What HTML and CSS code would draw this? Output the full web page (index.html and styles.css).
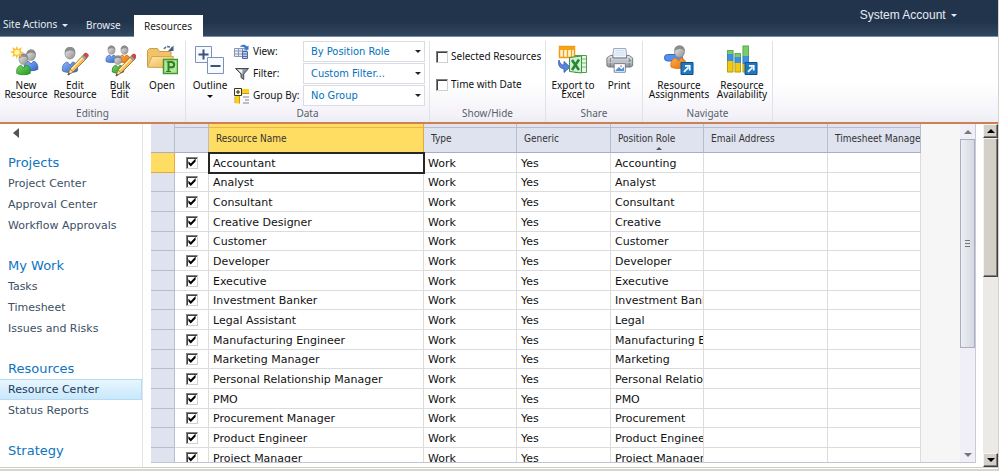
FILE: index.html
```html
<!DOCTYPE html>
<html lang="en">
<head>
<meta charset="utf-8">
<title>Resource Center</title>
<link rel="stylesheet" href="styles.css">
</head>
<body>
<div class="page">
  <header class="topbar">
    <nav class="tabs">
      <button class="site-actions" type="button">Site Actions <span class="caret"></span></button>
      <button class="tab" type="button">Browse</button>
      <button class="tab tab-active" type="button">Resources</button>
    </nav>
    <button class="account" type="button">System Account <span class="caret"></span></button>
  </header>

  <svg class="defs" width="0" height="0" aria-hidden="true">
    <defs>
      <linearGradient id="gGray" x1="0" y1="0" x2="1" y2="1"><stop offset="0" stop-color="#f0f0f0"/><stop offset="1" stop-color="#8c8c8c"/></linearGradient>
      <linearGradient id="gBlue" x1="0" y1="0" x2="1" y2="1"><stop offset="0" stop-color="#8db8f5"/><stop offset="1" stop-color="#2f62c4"/></linearGradient>
      <linearGradient id="gGreen" x1="0" y1="0" x2="1" y2="1"><stop offset="0" stop-color="#7ad662"/><stop offset="1" stop-color="#1f9a22"/></linearGradient>
      <linearGradient id="gOrange" x1="0" y1="0" x2="1" y2="1"><stop offset="0" stop-color="#ffb04a"/><stop offset="1" stop-color="#ea6a00"/></linearGradient>
      <linearGradient id="gFolder" x1="0" y1="0" x2="1" y2="1"><stop offset="0" stop-color="#ffe9a6"/><stop offset="1" stop-color="#eeb04a"/></linearGradient>
      <linearGradient id="gPrinter" x1="0" y1="0" x2="0" y2="1"><stop offset="0" stop-color="#e8eaee"/><stop offset="1" stop-color="#8f939c"/></linearGradient>
      <g id="head"><path d="M0-5.500C3.500-5.500 5-3 5 0S3 6 0 6-5 3.500-5 0-3.500-5.500 0-5.500z" fill="url(#gGray)" stroke="#808080" stroke-width=".7"/><path d="M-4.800-.5C-5.500-5-1.500-6.500 1-6 4-5.700 5.500-3 4.900 0 3.800-2.600 0-3.800-4.800-.5z" fill="#8c8c8c"/></g>
      <path id="torso" d="M-7.500 7C-8.500 1-5-2-2.500-2L0 1 2.500-2C5-2 8.500 1 7.500 7 4 9-4 9-7.500 7z"/>
      <g id="pencil"><path d="M0 0l2-6L15-19.500l3.500 3L5-3z" fill="#f7bd58" stroke="#9c6a2a" stroke-width=".9"/><path d="M3.500-6L15.800-18.500" stroke="#fff0b8" stroke-width="1.200"/><path d="M0 0l2-6L5-3z" fill="#efd8ae" stroke="#8a6a40" stroke-width=".6"/><path d="M0 0l.8-2.300L2.200-1z" fill="#333"/><path d="M14-18.500l1.600-1.800 3.400 3L17.300-15.500z" fill="#8ea7a8" stroke="#666" stroke-width=".5"/><path d="M15.600-20.300l1.300-1.500c1.800-.6 3.800 1.200 3.400 2.900L19-17.300z" fill="#dc4a46" stroke="#9b2c2c" stroke-width=".6"/></g>
      <g id="jump"><path d="M.5.500h12v12H.5z" fill="#1e78c2" stroke="#0f4f8c"/><path d="M3.500 9.800l4.500-4.500M4.500 3.800h4.700v4.700" fill="none" stroke="#fff" stroke-width="1.700"/></g>
    </defs>
  </svg>

  <section class="ribbon" aria-label="Resources ribbon">
    <div class="group group-editing">
      <div class="tools">
        <button class="tool tool-new" type="button">
          <svg class="icon" viewBox="0 0 32 32"><g transform="translate(21 10) scale(.9)"><use href="#head"/><use href="#torso" y="9" fill="url(#gBlue)" stroke="#23479a" stroke-width=".7"/></g><g transform="translate(13.500 14) scale(.9)"><use href="#head"/><use href="#torso" y="9" fill="url(#gGreen)" stroke="#1a7a1d" stroke-width=".7"/></g><path d="M7 1l1.300 3.300L12 2l-1.500 4L14 7.500l-3.500 1L12 12.500 8.200 10.500 6.500 14 5.500 10.500 2 12l1.500-3.500L0 7l3.500-1.300L2 2l3.500 2z" fill="#ffc02e"/><circle cx="7" cy="7.300" r="2.600" fill="#fff6b0"/></svg>
          <span class="label">New<br>Resource</span>
        </button>
        <button class="tool tool-edit" type="button">
          <svg class="icon" viewBox="0 0 32 32"><g transform="translate(11 8)"><use href="#torso" y="11" fill="url(#gBlue)" stroke="#3763b4" stroke-width=".7"/><use href="#head"/></g><use href="#pencil" x="9" y="30"/></svg>
          <span class="label">Edit<br>Resource</span>
        </button>
        <button class="tool tool-bulk" type="button">
          <svg class="icon" viewBox="0 0 32 32"><g transform="translate(7.500 5) scale(.72)"><use href="#torso" y="9" fill="url(#gBlue)" stroke="#3763b4"/><use href="#head"/></g><g transform="translate(20.500 5) scale(.72)"><use href="#torso" y="9" fill="url(#gOrange)" stroke="#c45a00"/><use href="#head"/></g><g transform="translate(14 15) scale(.75)"><use href="#torso" y="9" fill="url(#gGreen)" stroke="#1a7a1d"/><use href="#head"/></g><use href="#pencil" x="12" y="31"/></svg>
          <span class="label">Bulk<br>Edit</span>
        </button>
        <button class="tool tool-open" type="button">
          <svg class="icon" viewBox="0 0 32 32"><path d="M1.500 22V5.500l2-2h8l2 3H25v6L22 22z" fill="#f2c268" stroke="#c99c50"/><path d="M1.500 22L6 11.500h21.500L24 23z" fill="url(#gFolder)" stroke="#d3a75a"/><path d="M18 4c1.500-3 5-3 7.500-1" fill="none" stroke="#5a7294" stroke-width="1.600" stroke-dasharray="3 1"/><path d="M27.500.5V6H22z" fill="#3f5f92"/><path d="M17.500 14.500h14v14h-14z" fill="#b6e59e" stroke="#3f9b2f" stroke-width="1.500"/><path d="M22.500 26.500v-9.500h2.700c4 0 4 5.300 0 5.300h-2.500" fill="none" stroke="#2c8120" stroke-width="2"/><path d="M20 26.500h5M20.500 17h2" stroke="#2c8120"/></svg>
          <span class="label">Open</span>
        </button>
      </div>
      <h2 class="group-title">Editing</h2>
    </div>

    <div class="group group-data">
      <div class="tools">
        <button class="tool tool-outline" type="button">
          <svg class="icon" viewBox="0 0 32 32"><path d="M1.500 1.500h16v16h-16z" fill="#f7faff" stroke="#7d92b8"/><path d="M4.500 9.500h10M9.500 4.500v10" stroke="#3c5278" stroke-width="2"/><path d="M13.500 12.500h16v16h-16z" fill="#f7faff" stroke="#7d92b8"/><path d="M16.500 21h10" stroke="#3c5278" stroke-width="2"/></svg>
          <span class="label">Outline</span><span class="caret caret-dark"></span>
        </button>
        <div class="fields">
          <div class="field">
            <svg class="mini" viewBox="0 0 16 16"><path d="M.5 4.500h12v8H.5zM.5 7h12M.5 10h12M4.500 4.500v8M8.500 4.500v8" fill="#e7eefb" stroke="#8797b6"/><path d="M6 3c1-3 5-3 7-.5l1.500-1v4.300H10l1.500-1.300C10 2.500 8 2.500 6 3z" fill="#3976d0"/><path d="M8.500 7.500h5v7h-5z" fill="#b7cdf1" stroke="#526c9e"/><path d="M8.500 10h5M8.500 12.500h5" stroke="#526c9e"/></svg>
            <label for="view">View:</label>
            <span class="pick"><select id="view"><option>By Position Role</option></select></span>
          </div>
          <div class="field">
            <svg class="mini" viewBox="0 0 16 16"><path d="M1.500 2.500h13L9.700 8v5.500L7 11.500V8z" fill="#8d949c" stroke="#444b53"/><path d="M3.500 3.500h5L8.300 8z" fill="#f2f4f6"/></svg>
            <label for="filter">Filter:</label>
            <span class="pick"><select id="filter"><option>Custom Filter...</option></select></span>
          </div>
          <div class="field">
            <svg class="mini" viewBox="0 0 16 16"><path d="M8 1h7v5H8zM1.500 8H6v7.500H1.500z" fill="#f8d21c"/><path d="M1 8.500V15M5.500 8v7.500M8 5.500h7" stroke="#c99b10"/><path d="M9 9h6M11 12h4M9 15h6" stroke="#7c8794"/><path d="M.5.500h7v7h-7z" fill="#fffbd6" stroke="#333"/><path d="M2 4h4M4 2v4" stroke="#222"/></svg>
            <label for="groupby">Group By:</label>
            <span class="pick"><select id="groupby"><option>No Group</option></select></span>
          </div>
        </div>
      </div>
      <h2 class="group-title">Data</h2>
    </div>

    <div class="group group-show">
      <div class="tools checks">
        <label class="check"><input class="box" type="checkbox">Selected Resources</label>
        <label class="check"><input class="box" type="checkbox">Time with Date</label>
      </div>
      <h2 class="group-title">Show/Hide</h2>
    </div>

    <div class="group group-share">
      <div class="tools">
        <button class="tool tool-excel" type="button">
          <svg class="icon" viewBox="0 0 32 32"><path d="M2.500 1.500h15v11h-15z" fill="#fff4cf" stroke="#f09a12" stroke-width="1.500"/><path d="M2 3.500h16" stroke="#f6a31a" stroke-width="3"/><path d="M6.500 2v11M10.500 2v11M14.500 2v11" stroke="#f2a11c" stroke-width="1.300"/><path d="M2 15c1 4 3 5 5 5v-3.500l6 5.500-6 5.500v-4C3 24 .5 20 2 15z" fill="#5b86df" stroke="#2d55ab" stroke-width=".8"/><path d="M18 10.500h11.500v17H18z" fill="#e8f6e4" stroke="#49a050"/><path d="M24 14h5M24 18h5M24 22h5" stroke="#6fbd6b"/><path d="M12.500 12.500l12-1.500v17l-12-1.500z" fill="#d5efce" stroke="#3a9445"/><path d="M15 15l7 10M22 14.500L15 25" stroke="#24873a" stroke-width="2.600"/></svg>
          <span class="label">Export to<br>Excel</span>
        </button>
        <button class="tool tool-print" type="button">
          <svg class="icon" viewBox="0 0 32 32"><g transform="translate(3 1) scale(.86)"><path d="M9 3h14l1.500 11h-17z" fill="#f4f9ff" stroke="#8596ab"/><path d="M10.500 5.500h11M10 8h12M9.500 10.500h13" stroke="#bcd4ef"/><path d="M5 11h3v3h16v-3h3l4 3v9l-2.500 1.500h-25L1 23v-9z" fill="url(#gPrinter)" stroke="#686d77"/><path d="M5 14v10M27 14v10" stroke="#70757e"/><path d="M2 19h28" stroke="#c8ccd3"/><circle cx="28.500" cy="17" r=".9" fill="#3cb54a"/><path d="M9.500 20.500h13v10h-13z" fill="#fff" stroke="#667180"/><path d="M11 28.500l4-4 3 2.500 3-3v5H11z" fill="#4b93e2"/><circle cx="17.500" cy="23.500" r="1.200" fill="#f28b7b"/></g></svg>
          <span class="label">Print</span>
        </button>
      </div>
      <h2 class="group-title">Share</h2>
    </div>

    <div class="group group-nav">
      <div class="tools">
        <button class="tool tool-assign" type="button">
          <svg class="icon" viewBox="0 0 32 32"><rect x="1.500" y="9.500" width="18" height="6.500" rx="3" fill="#5590ec" stroke="#3467c0"/><use href="#torso" x="15.500" y="15" fill="url(#gOrange)" stroke="#cf6a10" stroke-width=".7"/><use href="#head" x="16.500" y="6.500"/><use href="#jump" x="17.500" y="17"/></svg>
          <span class="label">Resource<br>Assignments</span>
        </button>
        <button class="tool tool-avail" type="button">
          <svg class="icon" viewBox="0 0 32 32"><path d="M1 5h6.500v4H1zM8.500 8H15v4H8.500zM16.500.5H23V11h-6.500z" fill="#78cd68"/><path d="M1 9h6.500v7H1zM8.500 12H15v6H8.500zM16.500 11H23v8h-6.500z" fill="#3d8fe8"/><path d="M1 16h6.500v11.500H1zM8.500 18H15v9.500H8.500zM16.500 19H23v8.500h-6.500z" fill="#f7c70c"/><path d="M1.500 5.500H7V27H1.500zM9 8.500h5.500V27H9zM17 1h5.500v26H17z" fill="none" stroke="#44733f" stroke-opacity=".4"/><use href="#jump" x="18.500" y="17"/></svg>
          <span class="label">Resource<br>Availability</span>
        </button>
      </div>
      <h2 class="group-title">Navigate</h2>
    </div>
  </section>

  <div class="content">
    <nav class="sidebar" aria-label="Quick launch">
      <button class="collapse" type="button" aria-label="Collapse"></button>
      <section class="nav-group">
        <h3><a href="#">Projects</a></h3>
        <a href="#">Project Center</a>
        <a href="#">Approval Center</a>
        <a href="#">Workflow Approvals</a>
      </section>
      <section class="nav-group">
        <h3><a href="#">My Work</a></h3>
        <a href="#">Tasks</a>
        <a href="#">Timesheet</a>
        <a href="#">Issues and Risks</a>
      </section>
      <section class="nav-group">
        <h3><a href="#">Resources</a></h3>
        <a class="current" href="#">Resource Center</a>
        <a href="#">Status Reports</a>
      </section>
      <section class="nav-group">
        <h3><a href="#">Strategy</a></h3>
      </section>
    </nav>

    <main class="grid-frame">
      <div class="grid-view">
        <table class="grid">
          <colgroup><col class="c-row"><col class="c-check"><col class="c-name"><col class="c-type"><col class="c-generic"><col class="c-role"><col class="c-email"><col class="c-time"></colgroup>
          <thead><tr><th class="corner"></th><th></th><th class="sorted">Resource Name</th><th>Type</th><th>Generic</th><th class="role">Position Role</th><th>Email Address</th><th>Timesheet Manager</th></tr></thead>
          <tbody>
            <tr class="active"><td></td><td><input class="box" type="checkbox" aria-label="Accountant" checked></td><td>Accountant</td><td>Work</td><td>Yes</td><td>Accounting</td><td></td><td></td></tr>
            <tr><td></td><td><input class="box" type="checkbox" aria-label="Analyst" checked></td><td>Analyst</td><td>Work</td><td>Yes</td><td>Analyst</td><td></td><td></td></tr>
            <tr><td></td><td><input class="box" type="checkbox" aria-label="Consultant" checked></td><td>Consultant</td><td>Work</td><td>Yes</td><td>Consultant</td><td></td><td></td></tr>
            <tr><td></td><td><input class="box" type="checkbox" aria-label="Creative Designer" checked></td><td>Creative Designer</td><td>Work</td><td>Yes</td><td>Creative</td><td></td><td></td></tr>
            <tr><td></td><td><input class="box" type="checkbox" aria-label="Customer" checked></td><td>Customer</td><td>Work</td><td>Yes</td><td>Customer</td><td></td><td></td></tr>
            <tr><td></td><td><input class="box" type="checkbox" aria-label="Developer" checked></td><td>Developer</td><td>Work</td><td>Yes</td><td>Developer</td><td></td><td></td></tr>
            <tr><td></td><td><input class="box" type="checkbox" aria-label="Executive" checked></td><td>Executive</td><td>Work</td><td>Yes</td><td>Executive</td><td></td><td></td></tr>
            <tr><td></td><td><input class="box" type="checkbox" aria-label="Investment Banker" checked></td><td>Investment Banker</td><td>Work</td><td>Yes</td><td>Investment Banker</td><td></td><td></td></tr>
            <tr><td></td><td><input class="box" type="checkbox" aria-label="Legal Assistant" checked></td><td>Legal Assistant</td><td>Work</td><td>Yes</td><td>Legal</td><td></td><td></td></tr>
            <tr><td></td><td><input class="box" type="checkbox" aria-label="Manufacturing Engineer" checked></td><td>Manufacturing Engineer</td><td>Work</td><td>Yes</td><td>Manufacturing Engineer</td><td></td><td></td></tr>
            <tr><td></td><td><input class="box" type="checkbox" aria-label="Marketing Manager" checked></td><td>Marketing Manager</td><td>Work</td><td>Yes</td><td>Marketing</td><td></td><td></td></tr>
            <tr><td></td><td><input class="box" type="checkbox" aria-label="Personal Relationship Manager" checked></td><td>Personal Relationship Manager</td><td>Work</td><td>Yes</td><td>Personal Relationship</td><td></td><td></td></tr>
            <tr><td></td><td><input class="box" type="checkbox" aria-label="PMO" checked></td><td>PMO</td><td>Work</td><td>Yes</td><td>PMO</td><td></td><td></td></tr>
            <tr><td></td><td><input class="box" type="checkbox" aria-label="Procurement Manager" checked></td><td>Procurement Manager</td><td>Work</td><td>Yes</td><td>Procurement</td><td></td><td></td></tr>
            <tr><td></td><td><input class="box" type="checkbox" aria-label="Product Engineer" checked></td><td>Product Engineer</td><td>Work</td><td>Yes</td><td>Product Engineer</td><td></td><td></td></tr>
            <tr><td></td><td><input class="box" type="checkbox" aria-label="Project Manager" checked></td><td>Project Manager</td><td>Work</td><td>Yes</td><td>Project Manager</td><td></td><td></td></tr>
          </tbody>
        </table>
      </div>
      <div class="grid-scroll">
        <button class="arrow up" type="button" aria-label="Scroll grid up"></button>
        <div class="track"><div class="thumb"><span class="grip"></span></div></div>
        <button class="arrow down" type="button" aria-label="Scroll grid down"></button>
      </div>
    </main>

    <div class="page-scroll">
      <button class="arrow up" type="button" aria-label="Scroll page up"></button>
      <div class="track"><div class="thumb"></div></div>
      <button class="arrow down" type="button" aria-label="Scroll page down"></button>
    </div>
  </div>
  <footer class="status"></footer>
</div>
</body>
</html>
```
FILE: styles.css
```css
* { box-sizing: border-box; }

body {
  margin: 0;
  height: 100vh;
  overflow: hidden;
  background: #fff;
  color: #222;
  font: 11px/13px "DejaVu Sans", Verdana, sans-serif;
}

button, select, input { font: inherit; margin: 0; }
button { border: 0; padding: 0; background: none; color: inherit; }
a { color: inherit; text-decoration: none; }
h2, h3 { margin: 0; font-weight: normal; }
.defs { position: absolute; }

.page {
  display: flex;
  flex-direction: column;
  height: 100vh;
  margin-right: 1px;
  border-right: 1px solid #d5d2ca;
}

/* Top bar */
.topbar {
  display: flex;
  justify-content: space-between;
  flex: none;
  height: 37px;
  border-bottom: 1px solid #7b8ca6;
  background: linear-gradient(#21344b 0 22px, #31475f);
  color: #e6ecf3;
  font-family: "Noto Sans", Tahoma, sans-serif;
  font-size: 10px;
}
.tabs { display: flex; align-items: flex-end; }
.site-actions { width: 84px; height: 22px; padding: 0 0 1px 3px; text-align: left; white-space: nowrap; }
.tab { width: 50px; height: 22px; padding: 1px 0 0 2px; text-align: left; }
.tab-active {
  width: 69px;
  padding: 0 0 0 10px;
  margin-bottom: -1px;
  background: #fff;
  color: #222;
}
.account {
  align-self: flex-start;
  padding: 9px 41px 0 0;
  font-family: "Liberation Sans", Arial, sans-serif;
  font-size: 12px;
}
.caret {
  display: inline-block;
  margin-left: 2px;
  border: 3px solid transparent;
  border-top-color: currentColor;
  border-bottom: 0;
  vertical-align: middle;
}

/* Ribbon */
.ribbon {
  display: flex;
  flex: none;
  height: 85px;
  padding-top: 4px;
  background: linear-gradient(#fff 0 45px, #f4f2f8 78px, #e9eef4);
  font-family: "Noto Sans", Tahoma, sans-serif;
  font-size: 10px;
}
.group {
  display: flex;
  flex-direction: column;
  border-right: 1px solid #e0e2ea;
}
.group-editing { width: 186px; }
.group-data { width: 244px; }
.group-show { width: 116px; }
.group-share { width: 97px; }
.group-nav { width: 130px; }
.tools { display: flex; flex: 1; min-height: 0; align-items: flex-start; }
.group-title {
  height: 15px;
  font-size: 10px;
  line-height: 13px;
  text-align: center;
  color: #59606b;
}
.tool {
  display: flex;
  flex-direction: column;
  align-items: center;
  flex: none;
  padding-top: 4px;
  color: #111;
}
.icon { width: 32px; height: 32px; display: block; }
.label { margin-top: 4px; line-height: 9px; white-space: nowrap; }
.caret-dark { margin: 5px 0 0; }
.tool-new { width: 52px; }
.tool-edit { width: 46px; }
.tool-bulk { width: 44px; }
.tool-open { width: 40px; }
.tool-outline { width: 48px; }
.tool-excel { width: 54px; }
.tool-print { width: 38px; }
.tool-assign { width: 72px; }
.tool-avail { width: 54px; }

.fields { flex: 1; display: flex; flex-direction: column; gap: 1px; padding-right: 4px; }
.field { display: flex; align-items: center; }
.mini { width: 16px; height: 16px; flex: none; }
.field label { flex: 1; padding-left: 3px; color: #111; white-space: nowrap; }
.pick { position: relative; width: 122px; flex: none; }
.pick::after {
  content: "";
  position: absolute;
  right: 4px;
  top: 9px;
  border: 3px solid transparent;
  border-top-color: #222;
  border-bottom: 0;
  pointer-events: none;
}
.pick select {
  appearance: none;
  display: block;
  width: 100%;
  height: 21px;
  padding: 0 8px 0 7px;
  border: 1px solid #d9dce4;
  border-radius: 0;
  background: #fff;
  color: #0072bc;
  font: 11px/13px "DejaVu Sans Condensed", Tahoma, sans-serif;
}

.checks { flex-direction: column; gap: 15px; padding: 9px 0 0 6px; }
.check { display: flex; align-items: center; gap: 3px; white-space: nowrap; color: #111; }

.box {
  appearance: none;
  display: block;
  flex: none;
  width: 12px;
  height: 12px;
  border: 1px solid #808080;
  border-right-color: #d4d0c8;
  border-bottom-color: #d4d0c8;
  background: #fff;
  box-shadow: inset 1px 1px 0 #404040;
}
.box:checked::before {
  content: "";
  display: block;
  width: 8px;
  height: 8px;
  margin: 1px;
  background: #000;
  clip-path: polygon(5% 35%, 35% 62%, 95% 0, 95% 38%, 35% 100%, 5% 70%);
}

/* Content */
.content { display: flex; flex: 1; min-height: 0; border-top: 2px solid #cf7f52; }

.sidebar {
  flex: none;
  width: 143px;
  padding-top: 4px;
  border-right: 1px solid #e3e4e8;
  overflow: hidden;
}
.collapse {
  display: block;
  margin: 0 0 14px 13px;
  border: 5px solid transparent;
  border-right: 6px solid #555;
  border-left: 0;
}
.nav-group { margin-bottom: 19px; color: #3b4f65; }
.nav-group h3 { font-size: 13px; color: #0d74c0; }
.nav-group a { display: block; height: 21px; padding-left: 8px; line-height: 21px; white-space: nowrap; }
.nav-group .current {
  border: 1px solid #b6dcf5;
  border-left: 0;
  background: linear-gradient(#e8f6ff, #c8e8fb);
  color: #1b3a5c;
  line-height: 20px;
}

.grid-frame {
  display: flex;
  flex: 1;
  min-width: 0;
  margin: 0 7px 4px 8px;
  border-right: 1px solid #c9cad8;
  border-bottom: 1px solid #c2c4d0;
}
.grid-view { flex: 1; min-width: 0; overflow: hidden; background: #f6f6f6; }
.grid { width: 770px; table-layout: fixed; border-collapse: separate; border-spacing: 0; background: #fff; }
.c-row { width: 24px; }
.c-check { width: 34px; }
.c-name { width: 215px; }
.c-type, .c-role, .c-time { width: 93px; }
.c-generic { width: 94px; }
.c-email { width: 124px; }

.grid th {
  height: 29px;
  padding: 0 2px 0 7px;
  border-right: 1px solid #b9bccb;
  border-bottom: 1px solid #a9adc0;
  background: linear-gradient(#dfe2ef 3px, #b9bccb 3px 4px, #dfe2ef 4px);
  color: #333;
  font: 10px/13px "DejaVu Sans Condensed", Tahoma, sans-serif;
  text-align: left;
  white-space: nowrap;
  overflow: hidden;
}
.grid .corner { background: #dfe2ef; }
.grid .sorted {
  border-color: #e5a93c;
  background: linear-gradient(#fedd62 3px, #e9b548 3px 4px, #fedd62 4px);
}
.grid .role { position: relative; }
.grid .role::after {
  content: "";
  position: absolute;
  left: 45px;
  bottom: 2px;
  border: 3px solid transparent;
  border-bottom-color: #555;
  border-top: 0;
}
.grid td {
  height: 20px;
  padding: 1px 0 0 4px;
  border-right: 1px solid #dcdcdc;
  border-bottom: 1px solid #dcdcdc;
  line-height: 13px;
  color: #111;
  white-space: nowrap;
  overflow: hidden;
}
.grid tr:nth-child(3n+2) td { height: 19px; }
.grid td:first-child { background: #dfe2ef; border-color: #b9bccb; }
.grid td:nth-child(2) { padding: 0 0 0 11px; }
.grid .active td:first-child { background: #fedd62; border-color: #e5a93c; }
.grid .active td:nth-child(3) { outline: 2px solid #262626; outline-offset: -1px; }

.arrow { display: flex; align-items: center; justify-content: center; flex: none; }
.arrow::before { content: ""; border: 4px solid transparent; }
.up::before { border-bottom-color: currentColor; border-top: 0; }
.down::before { border-top-color: currentColor; border-bottom: 0; }

.grid-scroll { display: flex; flex-direction: column; flex: none; width: 15px; background: #f0eff7; color: #777; }
.grid-scroll .arrow { height: 15px; }
.track { flex: 1; min-height: 0; }
.grid-scroll .thumb {
  display: flex;
  align-items: center;
  justify-content: center;
  height: 68%;
  border: 1px solid #a9adbd;
  background: linear-gradient(90deg, #eceef4, #d6d9e2);
}
.grip { width: 5px; height: 7px; background: repeating-linear-gradient(#777 0 1px, transparent 1px 3px); }

.page-scroll {
  display: flex;
  flex-direction: column;
  flex: none;
  width: 15px;
  background: #eceae7;
  color: #000;
}
.page-scroll .arrow, .page-scroll .thumb {
  border: 1px solid #f4f3f0;
  border-right-color: #404040;
  border-bottom-color: #404040;
  background: #d4d0c8;
  box-shadow: inset -1px -1px 0 #808080;
}
.page-scroll .arrow { height: 14px; }
.page-scroll .thumb { height: 44%; }

.status { flex: none; height: 4px; border-top: 1px solid #d0cdc6; border-bottom: 2px solid #d8d5ce; }
```
